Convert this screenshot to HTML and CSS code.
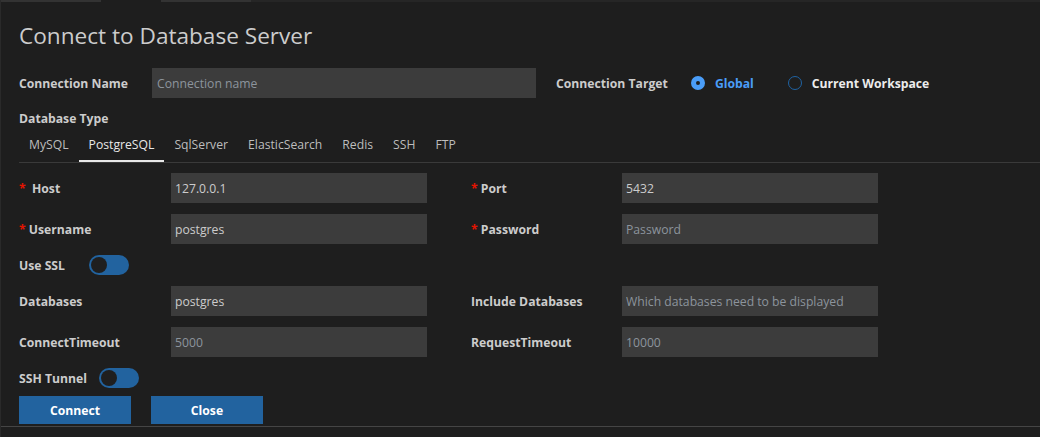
FILE: index.html
```html
<!DOCTYPE html>
<html lang="en">
<head>
<meta charset="utf-8">
<title>Connect to Database Server</title>
<link rel="stylesheet" href="styles.css">
</head>
<body>
<div class="topstrip">
  <span class="seg seg-a"></span><span class="seg seg-b"></span><span class="seg seg-c"></span><span class="seg seg-d"></span>
</div>
<main class="page">
  <h1 class="title">Connect to Database Server</h1>

  <div class="row-top">
    <label class="lbl lbl-name">Connection Name</label>
    <input class="inp inp-name" type="text" placeholder="Connection name">
    <span class="lbl lbl-target">Connection Target</span>
    <span class="radio radio-on"></span><span class="radio-text radio-text-on">Global</span>
    <span class="radio radio-off"></span><span class="radio-text">Current Workspace</span>
  </div>

  <div class="lbl section-lbl">Database Type</div>
  <nav class="tabs">
    <span class="tab">MySQL</span>
    <span class="tab tab-active">PostgreSQL</span>
    <span class="tab">SqlServer</span>
    <span class="tab">ElasticSearch</span>
    <span class="tab">Redis</span>
    <span class="tab">SSH</span>
    <span class="tab">FTP</span>
  </nav>

  <div class="form">
    <div class="frow">
      <div class="field">
        <label class="lbl flabel"><span class="req">*</span>&nbsp; Host</label>
        <input class="inp finp" type="text" value="127.0.0.1">
      </div>
      <div class="field field-r">
        <label class="lbl flabel"><span class="req">*</span> Port</label>
        <input class="inp finp" type="text" value="5432">
      </div>
    </div>
    <div class="frow">
      <div class="field">
        <label class="lbl flabel"><span class="req">*</span> Username</label>
        <input class="inp finp" type="text" value="postgres">
      </div>
      <div class="field field-r">
        <label class="lbl flabel"><span class="req">*</span> Password</label>
        <input class="inp finp" type="password" placeholder="Password">
      </div>
    </div>
    <div class="frow frow-toggle">
      <span class="lbl">Use SSL</span>
      <span class="toggle toggle-ssl"><span class="knob"></span></span>
    </div>
    <div class="frow">
      <div class="field">
        <label class="lbl flabel">Databases</label>
        <input class="inp finp" type="text" value="postgres">
      </div>
      <div class="field field-r">
        <label class="lbl flabel">Include Databases</label>
        <input class="inp finp" type="text" placeholder="Which databases need to be displayed">
      </div>
    </div>
    <div class="frow">
      <div class="field">
        <label class="lbl flabel">ConnectTimeout</label>
        <input class="inp finp" type="text" placeholder="5000">
      </div>
      <div class="field field-r">
        <label class="lbl flabel">RequestTimeout</label>
        <input class="inp finp" type="text" placeholder="10000">
      </div>
    </div>
    <div class="frow frow-toggle">
      <span class="lbl">SSH Tunnel</span>
      <span class="toggle toggle-ssh"><span class="knob"></span></span>
    </div>
  </div>

  <div class="actions">
    <button class="btn" type="button">Connect</button>
    <button class="btn" type="button">Close</button>
  </div>
</main>
<div class="bottomline"></div>
</body>
</html>
```

FILE: styles.css
```css
html, body {
  margin: 0;
  padding: 0;
  background: #1e1e1e;
  height: 100%;
}
body {
  font-family: "Open Sans", "Noto Sans", sans-serif;
  font-size: 12.2px;
  color: #cccccc;
  border-left: 1px solid #2a2a2a;
  box-sizing: border-box;
}
.topstrip {
  display: flex;
  height: 2px;
  background: #252526;
}
.seg { display: block; height: 2px; }
.seg-a { width: 100px; background: #333333; }
.seg-b { width: 60px; background: #1e1e1e; }
.seg-c { width: 90px; background: #333333; }
.seg-d { flex: 1; background: #262626; }

.page {
  padding-left: 18px;
}
.title {
  margin: 18px 0 0 0;
  font-size: 22.6px;
  line-height: 32px;
  font-weight: 400;
  color: #cccccc;
  height: 32px;
}
.lbl {
  font-weight: 700;
  color: #cccccc;
  line-height: 20px;
  white-space: nowrap;
}
.row-top {
  display: flex;
  align-items: center;
  height: 30px;
  margin-top: 16px;
}
.row-top .lbl, .frow .lbl { padding-top: 2px; }
.lbl-name { width: 133px; }
.inp {
  box-sizing: border-box;
  height: 30px;
  border: none;
  outline: none;
  background: #3c3c3c;
  color: #cccccc;
  font-family: inherit;
  font-size: 12.2px;
  padding: 1px 4px 0;
  margin: 0;
}
.inp::placeholder { color: #8c949c; opacity: 1; }
.inp-name { width: 384px; padding-left: 5px; }
.lbl-target { margin-left: 20px; margin-right: 23px; }
.radio {
  box-sizing: border-box;
  width: 14px;
  height: 14px;
  border-radius: 50%;
  flex: none;
}
.radio-on {
  border: 5px solid #4a9df8;
  background: #1e1e1e;
}
.radio-off {
  border: 1.5px solid #1f63a3;
  margin-left: 34px;
}
.radio-text {
  font-weight: 700;
  color: #ececec;
  margin-left: 10px;
  padding-top: 2px;
  line-height: 20px;
}
.radio-text-on { color: #4a9df8; }

.section-lbl { margin-top: 10px; padding-top: 1px; height: 19px; }
.tabs {
  display: flex;
  border-bottom: 1px solid #3a3a3a;
}
.tab {
  padding: 7px 10px 5px;
  line-height: 20px;
  color: #bdbdbd;
  border-bottom: 2px solid transparent;
}
.tab-active {
  color: #e8e8e8;
  border-bottom-color: #e8e8e8;
}

.form {
  display: flex;
  flex-direction: column;
  gap: 11px;
  margin-top: 10px;
}
.frow {
  display: flex;
  align-items: center;
  height: 30px;
}
.frow-toggle { height: 20px; }
.field {
  display: flex;
  align-items: center;
}
.field-r { margin-left: 44px; }
.flabel { width: 152px; flex: none; }
.field-r .flabel { width: 151px; }
.finp { width: 256px; }
.req { color: #e51400; }

.toggle {
  position: relative;
  display: block;
  width: 40px;
  height: 20px;
  border-radius: 10px;
  background: #22639f;
  flex: none;
}
.toggle-ssl { margin-left: 24px; }
.toggle-ssh { margin-left: 12px; }
.knob {
  position: absolute;
  left: 2px;
  top: 2px;
  width: 16px;
  height: 16px;
  border-radius: 50%;
  background: #1f1f1f;
}

.actions {
  display: flex;
  gap: 20px;
  margin-top: 8px;
}
.btn {
  width: 112px;
  height: 28px;
  border: none;
  background: #22639f;
  color: #ffffff;
  font-family: inherit;
  font-size: 12.2px;
  font-weight: 700;
  padding: 1px 0 0;
}
.bottomline {
  margin-top: 2px;
  height: 1px;
  background: #454545;
}
```
